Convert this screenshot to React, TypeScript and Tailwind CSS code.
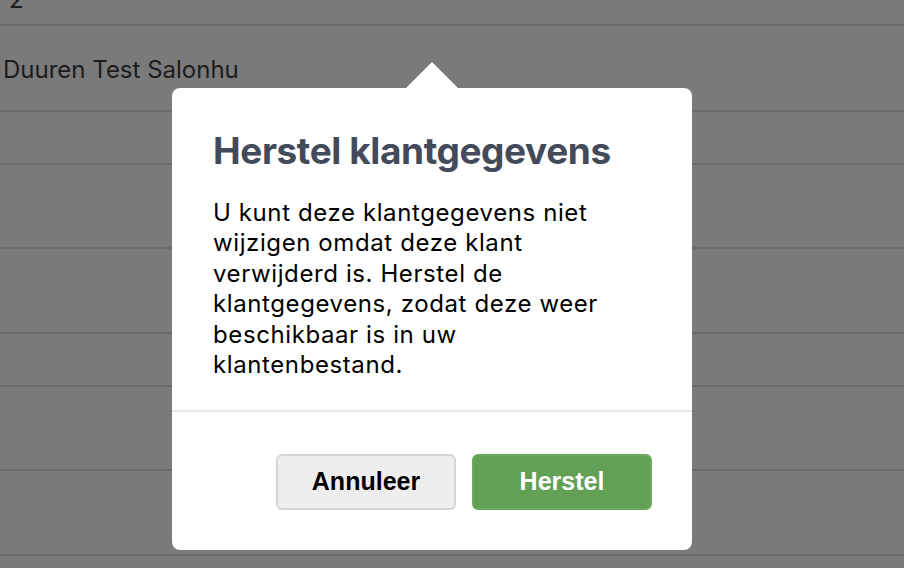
export default function App() {
  // background table rows: heights from top
  const rows = [26, 86, 53, 84, 85, 53, 84, 85, 30];

  return (
    <div
      className="relative w-[904px] h-[568px] overflow-hidden bg-[#7a7a7a]"
      style={{ fontFamily: "Inter, 'Liberation Sans', sans-serif" }}
    >
      <div className="flex flex-col">
        {rows.map((h, i) => (
          <div
            key={i}
            className={`border-b-2 border-[#6b6b6b] ${i === 0 ? "-mt-[6px]" : ""}`}
            style={{ height: i === 0 ? h + 6 : h }}
          >
            {i === 0 && <span className="block pl-[9px] -mt-[12px] text-[24px] text-[#1c1c1c]">2</span>}
            {i === 1 && (
              <div className="pl-[3px] pt-[29px] text-[24px] leading-[30px] text-[#1c1c1c]">Duuren Test Salonhu</div>
            )}
          </div>
        ))}
      </div>

      {/* popover */}
      <div className="absolute left-[172px] top-[88px] w-[520px] h-[462px] rounded-[8px] bg-white flex flex-col">
        <div className="absolute -top-[26px] left-[234px] w-0 h-0 border-l-[26px] border-r-[26px] border-b-[26px] border-l-transparent border-r-transparent border-b-white" />
        <div className="px-[41px] pt-[38px] h-[324px] border-b-2 border-[#e6e6e6]">
          <h2 className="text-[37px] leading-[50px] font-bold text-[#434a59] tracking-[-0.4px]">Herstel klantgegevens</h2>
          <p className="mt-[22px] w-[400px] text-[24px] leading-[30.4px] tracking-[0.6px] text-black">
            U kunt deze klantgegevens niet wijzigen omdat deze klant verwijderd is. Herstel de klantgegevens, zodat deze weer beschikbaar is in uw klantenbestand.
          </p>
        </div>
        <div className="flex justify-end gap-[16px] pr-[40px] pt-[42px]">
          <button className="w-[180px] h-[56px] rounded-[6px] bg-[#eeeeee] border-2 border-[#d6d6d6] text-[25px] font-bold text-black" style={{ fontFamily: "'Liberation Sans', Arial, sans-serif" }}>
            Annuleer
          </button>
          <button className="w-[180px] h-[56px] rounded-[6px] bg-[#62a055] border-2 border-[#6cab5e] text-[25px] font-bold text-white" style={{ fontFamily: "'Liberation Sans', Arial, sans-serif" }}>
            Herstel
          </button>
        </div>
      </div>
    </div>
  );
}
